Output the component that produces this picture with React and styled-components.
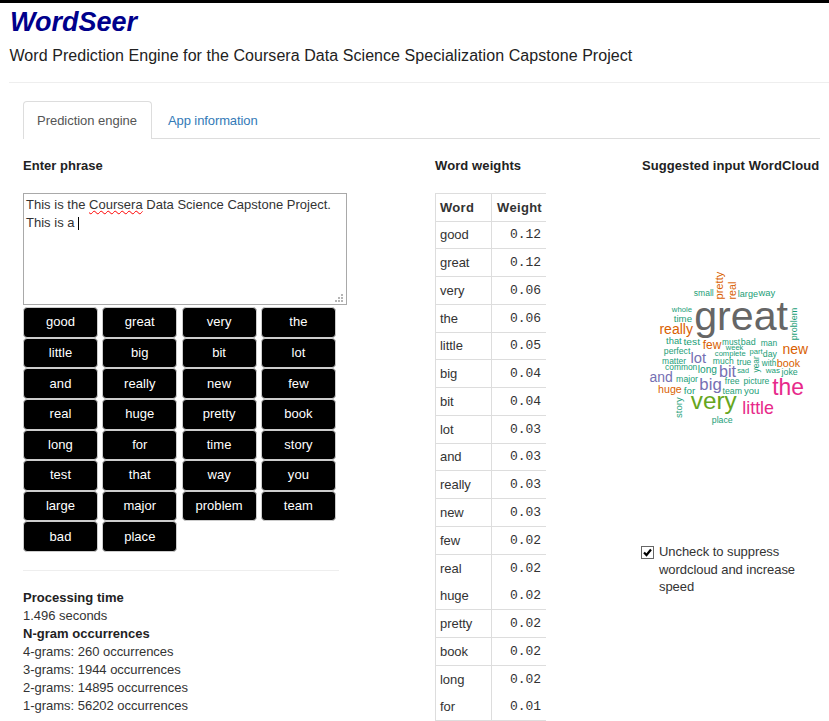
import React from "react";
import styled, { createGlobalStyle } from "styled-components";

const Global = createGlobalStyle`
  * { box-sizing: border-box; }
  body {
    margin: 0;
    background: #fff;
    color: #333;
    font: 13px/18px "Liberation Sans", Arial, sans-serif;
    overflow: hidden;
  }
`;

const Page = styled.div`
  width: 829px;
  height: 721px;
  overflow: hidden;
  border-top: 3px solid #000;
`;

const Header = styled.header`
  margin-left: 9px;
  height: 80px;
  border-bottom: 1px solid #eee;
`;

const Brand = styled.h1`
  margin: 0;
  padding: 3px 0 0 1px;
  font-size: 27px;
  line-height: 32px;
  font-style: italic;
  font-weight: bold;
  color: #00008b;
`;

const Tagline = styled.p`
  margin: 0;
  padding: 8px 0 0 0.5px;
  font-size: 16px;
  line-height: 20px;
  letter-spacing: 0.06px;
  color: #222;
  white-space: nowrap;
`;

const Tabs = styled.nav`
  display: flex;
  margin: 18px 9px 0 23px;
  height: 38px;
  border-bottom: 1px solid #ddd;
`;

const Tab = styled.a`
  height: 38px;
  width: ${(p) => p.$w}px;
  padding: 10px 0 0 13px;
  border: 1px solid ${(p) => (p.$active ? "#ddd" : "transparent")};
  border-bottom: 0;
  border-radius: 4px 4px 0 0;
  margin-right: 2px;
  background: ${(p) => (p.$active ? "#fff" : "transparent")};
  color: ${(p) => (p.$active ? "#555" : "#337ab7")};
  letter-spacing: ${(p) => p.$track}px;
  white-space: nowrap;
`;

const Columns = styled.main`
  display: grid;
  grid-template-columns: 412px 207px 187px;
  padding: 18px 0 0 23px;
`;

const Heading = styled.h2`
  margin: 0 0 18px;
  font-size: 13px;
  line-height: 18px;
  font-weight: bold;
  color: #222;
  letter-spacing: ${(p) => p.$track || 0}px;
  white-space: nowrap;
`;

const PhraseBox = styled.div`
  position: relative;
  width: 324px;
  height: 112px;
  border: 1px solid #a9a9a9;
  padding: 2px;
  letter-spacing: 0.015px;
  white-space: nowrap;
`;

const Misspelled = styled.span`
  text-decoration: underline wavy #f00 1px;
  text-underline-offset: 1px;
  text-decoration-skip-ink: none;
`;

const Caret = styled.span`
  display: inline-block;
  width: 1px;
  height: 13px;
  background: #000;
  vertical-align: -3px;
`;

const Grip = styled.svg`
  position: absolute;
  right: 3px;
  bottom: 2px;
`;

const ButtonGrid = styled.div`
  display: grid;
  grid-template-columns: repeat(4, 75px);
  grid-auto-rows: 30.64px;
  column-gap: 4.3px;
  padding-top: 2px;
`;

const WordButton = styled.button`
  font: inherit;
  padding: 0;
  color: #fff;
  background: #000;
  border: 1px solid #ccc;
  border-radius: 4px;
  letter-spacing: 0.05px;
`;

const Rule = styled.hr`
  width: 316px;
  margin: 18px 0 18px;
  border: 0;
  border-top: 1px solid #eee;
`;

const Stat = styled.div`
  font-weight: ${(p) => (p.$strong ? "bold" : "normal")};
  color: ${(p) => (p.$strong ? "#222" : "#333")};
  letter-spacing: ${(p) => (p.$strong ? 0.02 : -0.02)}px;
  white-space: nowrap;
`;

const WeightTable = styled.div`
  width: 111px;
  border-top: 1px solid #ddd;
  border-left: 1px solid #ddd;
`;

const WeightRow = styled.div`
  display: grid;
  grid-template-columns: 56px 54px;
  height: ${(p) => p.$h}px;
  line-height: ${(p) => p.$h - 1}px;
  font-weight: ${(p) => (p.$head ? "bold" : "normal")};
  letter-spacing: ${(p) => (p.$head ? 0.3 : -0.05)}px;
  border-bottom: 1px solid ${(p) => (p.$open ? "transparent" : "#ddd")};
`;

const WordCell = styled.div`
  padding-left: 4px;
  border-right: 1px solid #ddd;
  margin-bottom: -1px;
`;

const WeightCell = styled.div`
  padding-right: ${(p) => (p.$head ? 4 : 5)}px;
  text-align: right;
  ${(p) => !p.$head && `font-family: "Liberation Mono", monospace;`}
`;

const Cloud = styled.svg`
  display: block;
  width: 187px;
  height: 350px;
  font-family: "Liberation Sans", Arial, sans-serif;
`;

const CheckLabel = styled.label`
  display: flex;
  gap: 5px;
  margin-left: -1px;
  line-height: 17.5px;
  letter-spacing: -0.06px;
  white-space: nowrap;
`;

const CheckBox = styled.svg`
  margin-top: 3px;
  flex: none;
`;

const WORDS = "good great very the little big bit lot and really new few real huge pretty book long for time story test that way you large major problem team bad place".split(" ");

/* [word, weight, row height, no line beneath] */
const WEIGHTS = [
  ["good", "0.12", 27],
  ["great", "0.12", 28],
  ["very", "0.06", 28],
  ["the", "0.06", 28],
  ["little", "0.05", 27],
  ["big", "0.04", 28],
  ["bit", "0.04", 28],
  ["lot", "0.03", 28],
  ["and", "0.03", 27],
  ["really", "0.03", 28],
  ["new", "0.03", 28],
  ["few", "0.02", 28],
  ["real", "0.02", 28, true],
  ["huge", "0.02", 27],
  ["pretty", "0.02", 28],
  ["book", "0.02", 28],
  ["long", "0.02", 28, true],
  ["for", "0.01", 27],
];

const TEAL = "#1b9e77";
const ORANGE = "#d95f02";
const PURPLE = "#7570b3";
const PINK = "#e7298a";
const GREEN = "#66a61e";
const GREY = "#666";

/* [word, x, baseline, length, size, colour, vertical] */
const CLOUD = [
  ["small", 694, 296, 19.7, 8.5, TEAL],
  ["pretty", 723.5, 299.3, 27.6, 11, ORANGE, true],
  ["real", 736.3, 299.3, 17.6, 11, ORANGE, true],
  ["large", 738, 297, 20, 9, TEAL],
  ["way", 758.7, 296, 16.6, 9, TEAL],
  ["whole", 672, 312, 20, 8, TEAL],
  ["time", 674, 322, 18, 9, TEAL],
  ["great", 695, 330, 93, 41, GREY],
  ["really", 659.7, 333.7, 33.3, 14, ORANGE],
  ["problem", 797.5, 340, 32.3, 9, TEAL, true],
  ["that", 666.3, 343.5, 15.4, 9, TEAL],
  ["test", 683.7, 344.5, 16.3, 9, TEAL],
  ["few", 703, 349.3, 18.3, 12, ORANGE],
  ["must", 722.3, 344.7, 17.7, 9, TEAL],
  ["bad", 741, 344.7, 14.7, 9, TEAL],
  ["man", 761, 345.5, 16.3, 9, TEAL],
  ["new", 782.7, 354, 25.3, 14, ORANGE],
  ["perfect", 664, 354, 26.3, 9, TEAL],
  ["week", 726, 350, 17.3, 7.5, TEAL],
  ["complete", 715, 355.5, 30.7, 7.5, TEAL],
  ["part", 749.7, 353.7, 13, 8, TEAL],
  ["day", 763, 357, 14, 9, TEAL],
  ["matter", 662.3, 364, 23.7, 9, TEAL],
  ["lot", 690.7, 363.3, 15.3, 15, PURPLE],
  ["much", 713, 364, 20.7, 9, TEAL],
  ["true", 737, 365, 14.3, 9, TEAL],
  ["year", 759.5, 372.3, 16, 9, TEAL, true],
  ["with", 762, 366, 14.3, 9, TEAL],
  ["book", 777, 367, 23, 11, ORANGE],
  ["common", 665.3, 370, 32, 9, TEAL],
  ["long", 698, 372.5, 19, 10, TEAL],
  ["bit", 719.3, 376.7, 16.7, 16.5, PURPLE],
  ["sad", 737.3, 373, 11.7, 8, TEAL],
  ["was", 766, 373, 14, 8, TEAL],
  ["joke", 781.7, 375, 16, 9, TEAL],
  ["and", 649.7, 382, 23, 14, PURPLE],
  ["major", 676.3, 382, 21.7, 9, TEAL],
  ["big", 699.7, 390, 22, 17, PURPLE],
  ["free", 725, 384, 14.5, 9, TEAL],
  ["picture", 743.7, 384, 25.6, 9, TEAL],
  ["the", 772.7, 394.7, 31.3, 24, PINK],
  ["huge", 658.3, 393, 23.4, 11, ORANGE],
  ["for", 684, 393.5, 11.3, 9, TEAL],
  ["team", 722.7, 393.5, 19.3, 9, TEAL],
  ["you", 744.3, 393.5, 15, 9, TEAL],
  ["very", 691.3, 409, 45.4, 24, GREEN],
  ["little", 742.7, 413.7, 31.3, 19, PINK],
  ["story", 681.7, 417.7, 20.4, 9, TEAL, true],
  ["place", 712, 423, 20.7, 9, TEAL],
];

function CloudWord({ item: [word, x, y, length, size, fill, vertical] }) {
  const bearing = size * 0.02;
  const px = vertical ? x : x - bearing;
  const py = vertical ? y + bearing : y;
  return (
    <text
      x={px}
      y={py}
      fontSize={size}
      fill={fill}
      textLength={length + bearing}
      lengthAdjust="spacingAndGlyphs"
      transform={vertical ? `rotate(-90 ${px} ${py})` : undefined}
    >
      {word}
    </text>
  );
}

export default function App() {
  return (
    <Page>
      <Global />
      <Header>
        <Brand>WordSeer</Brand>
        <Tagline>Word Prediction Engine for the Coursera Data Science Specialization Capstone Project</Tagline>
      </Header>
      <Tabs>
        <Tab $active $w={129} $track={-0.03}>Prediction engine</Tab>
        <Tab $w={118} $track={-0.1}>App information</Tab>
      </Tabs>
      <Columns>
        <section>
          <Heading $track={0.03}>Enter phrase</Heading>
          <PhraseBox>
            This is the <Misspelled>Coursera</Misspelled> Data Science Capstone Project.
            <br />
            This is a <Caret />
            <Grip width="8" height="8" fill="#b5b5b5">
              <path d="M6 0h2v2H6zM3 3h2v2H3zM6 3h2v2H6zM0 6h2v2H0zM3 6h2v2H3zM6 6h2v2H6z" />
            </Grip>
          </PhraseBox>
          <ButtonGrid>
            {WORDS.map((w) => (
              <WordButton key={w}>{w}</WordButton>
            ))}
          </ButtonGrid>
          <Rule />
          <Stat $strong>Processing time</Stat>
          <Stat>1.496 seconds</Stat>
          <Stat $strong>N-gram occurrences</Stat>
          <Stat>4-grams: 260 occurrences</Stat>
          <Stat>3-grams: 1944 occurrences</Stat>
          <Stat>2-grams: 14895 occurrences</Stat>
          <Stat>1-grams: 56202 occurrences</Stat>
        </section>
        <section>
          <Heading $track={0.1}>Word weights</Heading>
          <WeightTable>
            <WeightRow $h={28} $head>
              <WordCell>Word</WordCell>
              <WeightCell $head>Weight</WeightCell>
            </WeightRow>
            {WEIGHTS.map(([word, weight, h, open]) => (
              <WeightRow key={word} $h={h} $open={open}>
                <WordCell>{word}</WordCell>
                <WeightCell>{weight}</WeightCell>
              </WeightRow>
            ))}
          </WeightTable>
        </section>
        <section>
          <Heading $track={0.08}>Suggested input WordCloud</Heading>
          <Cloud viewBox="642 193 187 350">
            {CLOUD.map((item) => (
              <CloudWord key={item[0]} item={item} />
            ))}
          </Cloud>
          <CheckLabel>
            <CheckBox width="13" height="13">
              <rect x="0.5" y="0.5" width="12" height="12" fill="#fff" stroke="#666" />
              <path d="M3 6.5L5.5 9L10 3.5" fill="none" stroke="#000" strokeWidth="2.2" />
            </CheckBox>
            <span>
              Uncheck to suppress
              <br />
              wordcloud and increase
              <br />
              speed
            </span>
          </CheckLabel>
        </section>
      </Columns>
    </Page>
  );
}
